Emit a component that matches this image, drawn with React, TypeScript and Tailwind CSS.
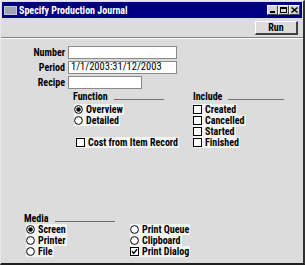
import React from "react";

const F = "font-['Roboto_Condensed','Liberation_Sans',Arial,sans-serif] font-bold whitespace-nowrap";
const L = `${F} text-[10px] leading-[11px] text-black`;

function Radio({ checked }: { checked?: boolean }) {
  return (
    <svg width="9" height="9" viewBox="0 0 9 9" className="shrink-0">
      <circle cx="4.5" cy="4.5" r="3.9" fill="#ffffff" stroke="#000000" strokeWidth="1" />
      {checked && <circle cx="4.5" cy="4.5" r="2.3" fill="#000000" />}
    </svg>
  );
}

function Check({ checked }: { checked?: boolean }) {
  return (
    <svg width="9" height="9" viewBox="0 0 9 9" className="shrink-0">
      <rect x="0.5" y="0.5" width="8" height="8" fill="#ffffff" stroke="#000000" strokeWidth="1" />
      {checked && <path d="M2 4.3 L3.8 6.4 L7 2.3" fill="none" stroke="#000000" strokeWidth="1.4" />}
    </svg>
  );
}

function RadioRow({ label, checked }: { label: string; checked?: boolean }) {
  return (
    <div className="h-[11px] flex items-center">
      <div className="flex items-center gap-[3px] bg-[#f4f4f4] pr-[1px] h-[11px]">
        <Radio checked={checked} />
        <span className={L}>{label}</span>
      </div>
    </div>
  );
}

function CheckRow({ label, checked }: { label: string; checked?: boolean }) {
  return (
    <div className="h-[11px] flex items-center">
      <div className="flex items-center gap-[3px] bg-[#f4f4f4] pr-[1px] h-[11px]">
        <Check checked={checked} />
        <span className={L}>{label}</span>
      </div>
    </div>
  );
}

function Header({ label }: { label: string }) {
  return (
    <div className="flex items-end h-[11px] w-[91px]">
      <span className={L}>{label}</span>
      <div className="flex-1 ml-[6px] mb-[2px] h-px bg-[#707070]" />
    </div>
  );
}

function Field({ label, value, w }: { label: string; value?: string; w: number }) {
  return (
    <div className="flex items-center h-[14px]">
      <div className={`${L} w-[65px] text-right pr-[3px]`}>{label}</div>
      <div
        className="h-[13px] bg-white border border-[#8a8a8a] flex items-center pl-[2px] font-['Roboto_Condensed','Liberation_Sans',Arial,sans-serif] text-[10.5px] text-black whitespace-nowrap"
        style={{ width: w }}
      >
        {value}
      </div>
    </div>
  );
}

export default function App() {
  return (
    <div className="w-[305px] h-[265px] bg-[#dcdcdc] border-t border-l border-[#e8e8e8] border-r-2 border-b-2 border-r-[#303030] border-b-[#202020] flex flex-col">
      <div className="mx-[1px] mt-[1px] h-[16px] bg-[#000080] flex items-center">
        <div className="ml-[2px] w-[13px] h-[9px] bg-[#a0a0b8] border border-[#c8c8d8]" />
        <span className={`${F} ml-[2px] text-white text-[10px] leading-[11px]`}>Specify Production Journal</span>
        <div className="ml-auto mr-[2px] flex gap-[0px]">
          {["min", "max", "close"].map((k) => (
            <div
              key={k}
              className="w-[11px] h-[10px] bg-[#d4d4d4] border-t border-l border-white border-r border-b border-r-[#404040] border-b-[#404040] flex items-center justify-center"
            >
              {k === "min" && <div className="w-[5px] h-[2px] bg-black mt-[4px] -ml-[1px]" />}
              {k === "max" && <div className="w-[7px] h-[6px] border border-black border-t-2" />}
              {k === "close" && (
                <svg width="7" height="6" viewBox="0 0 7 6">
                  <path d="M0.5 0.5 L6.5 5.5 M6.5 0.5 L0.5 5.5" stroke="#000" strokeWidth="1.4" />
                </svg>
              )}
            </div>
          ))}
        </div>
      </div>
      <div className="h-[19px] flex items-center justify-end pr-[5px] pt-[1px]">
        <div className="w-[43px] h-[14px] bg-[#dcdcdc] border-t border-l border-white border-r-2 border-b-2 border-r-[#404040] border-b-[#404040] flex items-center justify-center">
          <span className={L}>Run</span>
        </div>
      </div>
      <div className="h-px bg-[#808080]" />
      <div className="h-px bg-white" />
      <div className="flex-1 flex flex-col pl-[2px] pt-[6px]">
        <Field label="Number" w={109} />
        <div className="h-px" />
        <Field label="Period" value="1/1/2003:31/12/2003" w={109} />
        <div className="h-px" />
        <Field label="Recipe" w={74} />
        <div className="flex mt-[2px] pl-[70px]">
          <div className="w-[120px] flex flex-col">
            <Header label="Function" />
            <div className="mt-[2px] pl-[1px]">
              <RadioRow label="Overview" checked />
              <RadioRow label="Detailed" />
            </div>
            <div className="mt-[11px] pl-[3px]">
              <CheckRow label="Cost from Item Record" />
            </div>
          </div>
          <div className="flex flex-col">
            <Header label="Include" />
            <div className="mt-[2px]">
              <CheckRow label="Created" />
              <CheckRow label="Cancelled" />
              <CheckRow label="Started" />
              <CheckRow label="Finished" />
            </div>
          </div>
        </div>
        <div className="flex flex-col mt-[65px] pl-[21px]">
          <Header label="Media" />
          <div className="flex">
            <div className="w-[106px] pl-[2px]">
              <RadioRow label="Screen" checked />
              <RadioRow label="Printer" />
              <RadioRow label="File" />
            </div>
            <div>
              <RadioRow label="Print Queue" />
              <RadioRow label="Clipboard" />
              <CheckRow label="Print Dialog" checked />
            </div>
          </div>
        </div>
      </div>
    </div>
  );
}
